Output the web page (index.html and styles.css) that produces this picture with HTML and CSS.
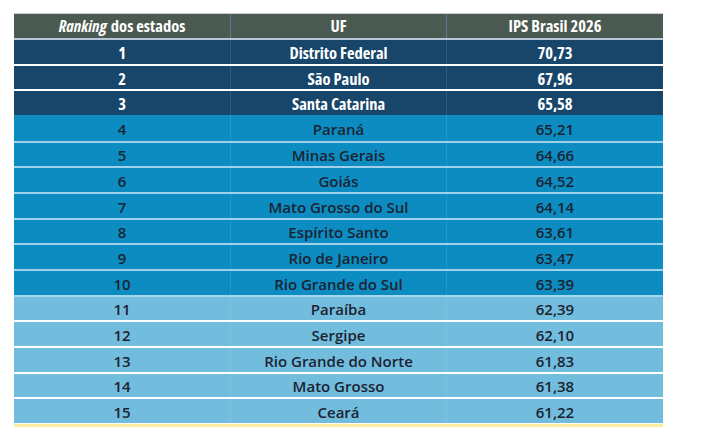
FILE: index.html
```html
<!DOCTYPE html>
<html lang="pt-BR">
<head>
<meta charset="utf-8">
<link rel="stylesheet" href="styles.css">
</head>
<body>
<div class="page">
  <div class="table">
    <div class="row head">
      <div class="cell"><em>Ranking</em> dos estados</div>
      <div class="cell">UF</div>
      <div class="cell">IPS Brasil 2026</div>
    </div>
    <div class="row dark"><div class="cell">1</div><div class="cell">Distrito Federal</div><div class="cell">70,73</div></div>
    <div class="row dark"><div class="cell">2</div><div class="cell">São Paulo</div><div class="cell">67,96</div></div>
    <div class="row dark"><div class="cell">3</div><div class="cell">Santa Catarina</div><div class="cell">65,58</div></div>
    <div class="row mid first"><div class="cell">4</div><div class="cell">Paraná</div><div class="cell">65,21</div></div>
    <div class="row mid"><div class="cell">5</div><div class="cell">Minas Gerais</div><div class="cell">64,66</div></div>
    <div class="row mid"><div class="cell">6</div><div class="cell">Goiás</div><div class="cell">64,52</div></div>
    <div class="row mid"><div class="cell">7</div><div class="cell">Mato Grosso do Sul</div><div class="cell">64,14</div></div>
    <div class="row mid"><div class="cell">8</div><div class="cell">Espírito Santo</div><div class="cell">63,61</div></div>
    <div class="row mid"><div class="cell">9</div><div class="cell">Rio de Janeiro</div><div class="cell">63,47</div></div>
    <div class="row mid"><div class="cell">10</div><div class="cell">Rio Grande do Sul</div><div class="cell">63,39</div></div>
    <div class="row light"><div class="cell">11</div><div class="cell">Paraíba</div><div class="cell">62,39</div></div>
    <div class="row light"><div class="cell">12</div><div class="cell">Sergipe</div><div class="cell">62,10</div></div>
    <div class="row light"><div class="cell">13</div><div class="cell">Rio Grande do Norte</div><div class="cell">61,83</div></div>
    <div class="row light"><div class="cell">14</div><div class="cell">Mato Grosso</div><div class="cell">61,38</div></div>
    <div class="row light"><div class="cell">15</div><div class="cell">Ceará</div><div class="cell">61,22</div></div>
    <div class="foot"></div>
  </div>
</div>
</body>
</html>
```
FILE: styles.css
```css
html, body {
  margin: 0;
  padding: 0;
  background: #ffffff;
}
.page {
  padding: 13px 0 0 14px;
}
.table {
  width: 649px;
  font-family: "Open Sans", "Noto Sans", sans-serif;
  font-size: 15px;
}
.row {
  display: grid;
  grid-template-columns: 216px 216px 217px;
  height: 25.67px;
  box-sizing: border-box;
  border-top: 2px solid rgba(255, 255, 255, 0.8);
}
.cell {
  display: flex;
  align-items: center;
  justify-content: center;
  padding-top: 3px;
  line-height: 1;
  white-space: nowrap;
}
.cell + .cell {
  border-left: 1px solid rgba(255, 255, 255, 0.1);
}
.head {
  height: 25px;
  border-top: 1px solid #c9cfcc;
  background: #4b5a50;
  color: #ffffff;
  font-weight: 700;
  font-stretch: 75%;
  font-size: 16.5px;
}
.head .cell {
  padding-top: 1px;
}
.head .cell + .cell {
  border-left: 1px solid #5c7b8f;
}
.head em {
  font-style: italic;
  margin-right: 0.25em;
}
.dark {
  background: #17466a;
  color: #ffffff;
  font-weight: 700;
  font-stretch: 75%;
  font-size: 16.5px;
  border-top-color: #b6c6d4;
}
.dark + .dark {
  border-top-color: #ffffff;
}
.mid {
  background: #0d8cc1;
  color: #1b2331;
  font-weight: 600;
  border-top-color: #9fd1ea;
}
.mid.first {
  border-top: 0;
}
.light {
  background: #72bcdd;
  color: #1b2331;
  font-weight: 600;
  border-top-color: #ffffff;
}
.mid + .light {
  border-top-color: #a6d6ee;
}
.foot {
  height: 8px;
  margin-top: 1px;
  background: #fbed9c;
}
```
